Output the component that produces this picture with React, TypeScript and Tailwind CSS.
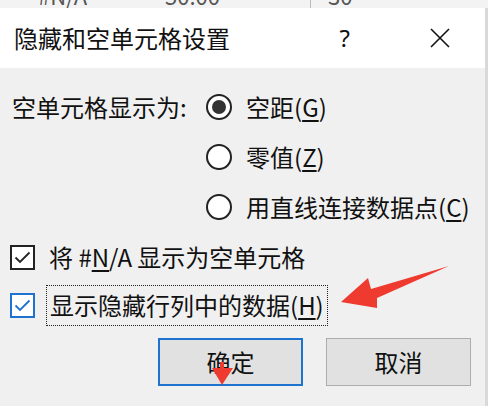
import React from 'react';

const font = { fontFamily: '"Microsoft YaHei", "Noto Sans CJK SC", "Noto Sans", sans-serif' };

function Radio({ checked, label, hotkey }: { checked?: boolean; label: string; hotkey: string }) {
  return (
    <div className="flex items-center h-[50px]">
      <span className="w-[26px] h-[26px] rounded-full border-[2px] border-[#222] bg-white flex items-center justify-center">
        {checked && <span className="w-[14px] h-[14px] rounded-full bg-[#333]" />}
      </span>
      <span className="ml-[14px] text-[24px] text-[#111]">
        {label}(<span className="underline underline-offset-[3px]">{hotkey}</span>)
      </span>
    </div>
  );
}

function Check({ focus }: { focus?: boolean }) {
  return (
    <span
      className={
        'w-[25px] h-[25px] border-[2px] bg-white flex items-center justify-center shrink-0 ' +
        (focus ? 'border-[#1e73d0]' : 'border-[#222]')
      }
    >
      <svg width="17" height="13" viewBox="0 0 17 13">
        <path d="M1.5 6.5 L6 11 L15.5 1.5" fill="none" stroke={focus ? '#1e73d0' : '#222'} strokeWidth="1.8" />
      </svg>
    </span>
  );
}

export default function App() {
  return (
    <div className="relative w-[488px] h-[406px] bg-[#d9d9d9] overflow-hidden" style={font}>
      {/* sheet behind the dialog */}
      <div className="h-[8px] bg-[#f3f3f3] relative overflow-hidden text-[#555] text-[22px]">
        <span className="absolute left-[38px] top-[-21px]">#N/A</span>
        <span className="absolute left-[165px] top-[-21px]">50.00</span>
        <span className="absolute left-[310px] top-0 w-[1px] h-[8px] bg-[#bbb]" />
        <span className="absolute left-[328px] top-[-21px]">30</span>
      </div>

      <div className="w-[485px] h-[398px] flex flex-col">
        {/* title bar */}
        <div className="h-[60px] bg-white flex items-center pl-[14px] text-[#111]">
          <span className="text-[24px]">隐藏和空单元格设置</span>
          <span className="ml-auto mr-[80px] text-[24px] leading-none" style={{ fontFamily: '"Noto Sans", sans-serif' }}>?</span>
          <svg width="20" height="20" viewBox="0 0 20 20" className="mr-[35px]">
            <path d="M1 1 L19 19 M19 1 L1 19" stroke="#111" strokeWidth="1.6" />
          </svg>
        </div>

        {/* body */}
        <div className="flex-1 bg-[#f0f0f0] flex flex-col">
          <div className="flex pt-[14px]">
            <div className="h-[50px] flex items-center pl-[12px] w-[206px] text-[24px] text-[#111]">
              空单元格显示为:
            </div>
            <div className="flex flex-col">
              <Radio checked label="空距" hotkey="G" />
              <Radio label="零值" hotkey="Z" />
              <Radio label="用直线连接数据点" hotkey="C" />
            </div>
          </div>

          <div className="flex items-center h-[50px] pl-[10px]">
            <Check />
            <span className="ml-[14px] text-[24px] text-[#111]">
              将 #<span className="underline underline-offset-[3px]">N</span>/A 显示为空单元格
            </span>
          </div>

          <div className="flex items-center h-[46px] pl-[10px]">
            <Check focus />
            <span className="ml-[11px] h-[41px] px-[3px] flex items-center border border-dotted border-[#222] text-[24px] text-[#111]">
              显示隐藏行列中的数据(<span className="underline underline-offset-[3px]">H</span>)
            </span>
          </div>

          <div className="flex pt-[10px] pl-[158px] gap-[23px]">
            <button className="w-[145px] h-[48px] bg-[#e1e1e1] border-[2px] border-[#1e73d0] text-[24px] text-[#111]">
              确定
            </button>
            <button className="w-[145px] h-[48px] bg-[#e1e1e1] border border-[#adadad] text-[24px] text-[#111]">
              取消
            </button>
          </div>
        </div>
      </div>

      {/* red annotations */}
      <svg className="absolute inset-0 pointer-events-none" width="488" height="406" viewBox="0 0 488 406">
        <polygon points="341,302 368,278 371,289 449,266 377,298 377,308" fill="#ee3a2f" />
        <rect x="220" y="362" width="4" height="8" fill="#ee3a2f" />
        <polygon points="212,368 233,368 222,385" fill="#ee3a2f" />
      </svg>
    </div>
  );
}
